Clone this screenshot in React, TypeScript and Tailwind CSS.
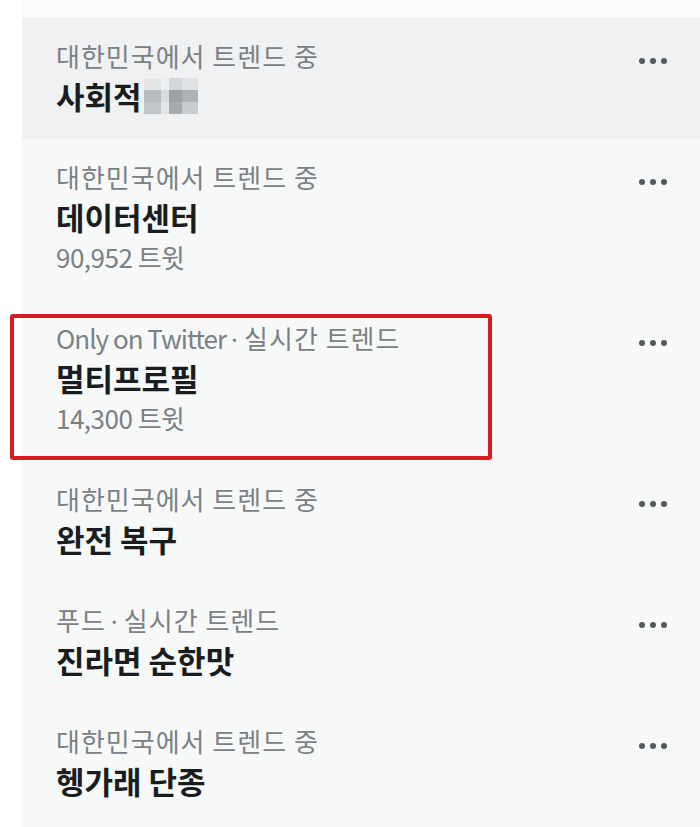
import React from "react";

type Trend = {
  meta: React.ReactNode;
  title: React.ReactNode;
  count?: string;
  hovered?: boolean;
  marked?: boolean;
};

const Dot = () => (
  <span
    className="mx-[5px]"
    style={{ fontFamily: '"Noto Sans", sans-serif' }}
  >
    ·
  </span>
);

const blur = [
  ["#e4e6e8", "#eceeef", "#d5d8da", "#dfe1e3"],
  ["#b9bcbf", "#d9dbdd", "#9ea2a6", "#aeb2b5"],
  ["#c3c6c9", "#e2e4e6", "#a7abae", "#c9ccce"],
];
const colW = [17, 8, 13, 16];

const trends: Trend[] = [
  {
    meta: "대한민국에서 트렌드 중",
    title: (
      <span className="inline-flex items-center">
        사회적
        <span className="ml-[2px] inline-flex flex-col">
          {blur.map((row, r) => (
            <span key={r} className="flex h-[12px]">
              {row.map((c, k) => (
                <span key={k} style={{ width: colW[k], background: c }} />
              ))}
            </span>
          ))}
        </span>
      </span>
    ),
    hovered: true,
  },
  { meta: "대한민국에서 트렌드 중", title: "데이터센터", count: "90,952 트윗" },
  {
    meta: (
      <>
        <span className="tracking-[-1px]">Only on Twitter</span>
        <Dot />
        실시간 트렌드
      </>
    ),
    title: "멀티프로필",
    count: "14,300 트윗",
    marked: true,
  },
  { meta: "대한민국에서 트렌드 중", title: "완전 복구" },
  {
    meta: (
      <>
        푸드
        <Dot />
        실시간 트렌드
      </>
    ),
    title: "진라면 순한맛",
  },
  { meta: "대한민국에서 트렌드 중", title: "헹가래 단종" },
];

function Dots() {
  return (
    <div className="flex items-start gap-[5px] self-start pt-[22px]">
      <span className="h-[6px] w-[6px] rounded-full bg-[#55595e]" />
      <span className="h-[6px] w-[6px] rounded-full bg-[#55595e]" />
      <span className="h-[6px] w-[6px] rounded-full bg-[#55595e]" />
    </div>
  );
}

export default function App() {
  return (
    <div
      className="flex min-h-[827px] w-[700px] bg-white"
      style={{ fontFamily: '"Noto Sans CJK KR", "Noto Sans", sans-serif' }}
    >
      <div className="w-[22px] shrink-0 bg-white" />
      <div className="flex-1 bg-[#f7f9f9]">
        <div className="h-[18px] bg-[#fbfbfb]" />
        {trends.map((t, i) => (
          <div
            key={i}
            className={`relative flex justify-between pl-[34px] pr-[33px] pt-[18px] pb-[23px] ${
              t.hovered ? "bg-[#eff1f2]" : ""
            }`}
          >
            <div className="flex flex-col">
              <div className="h-[40px] whitespace-nowrap text-[26px] leading-[40px] tracking-[1px] text-[#7b8085]">
                {t.meta}
              </div>
              <div className="h-[40px] whitespace-nowrap text-[31px] font-bold leading-[40px] text-[#1a1d20]">
                {t.title}
              </div>
              {t.count && (
                <div className="h-[40px] whitespace-nowrap text-[26px] leading-[40px] tracking-[-0.5px] text-[#7b8085]">
                  {t.count}
                </div>
              )}
            </div>
            <Dots />
            {t.marked && (
              <div className="pointer-events-none absolute left-[-12px] top-[14px] h-[146px] w-[482px] rounded-[3px] border-[4px] border-[#d91c20]" />
            )}
          </div>
        ))}
      </div>
    </div>
  );
}
